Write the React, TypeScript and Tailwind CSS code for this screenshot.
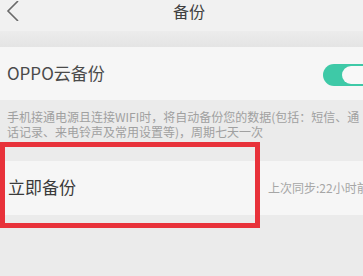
export default function App() {
  return (
    <div
      className="relative w-[363px] h-[276px] overflow-hidden bg-[#ebebeb] text-[#3a3a3a]"
      style={{ fontFamily: '"Noto Sans CJK SC", "Noto Sans", sans-serif' }}
    >
      {/* header */}
      <div className="relative h-[31px] bg-[#f1f1f1] flex items-start justify-center pt-[2px]">
        <svg className="absolute left-[5px] top-[1px]" width="15" height="20" viewBox="0 0 15 20">
          <path d="M13 0 L3 10 L13 20" fill="none" stroke="#6a6a6a" strokeWidth="1.6" />
        </svg>
        <span className="pl-[15px] text-[16px] leading-[18px] text-[#404040]">备份</span>
      </div>
      <div className="h-[16px] bg-gradient-to-b from-[#ececec] to-[#e4e4e4]" />

      {/* cloud backup row */}
      <div className="h-[53px] bg-[#f6f6f6] flex items-center justify-between pl-[7px]">
        <span className="text-[17px] text-[#4a4a4a] -mt-[2px]">OPPO云备份</span>
        <div className="w-[52px] h-[22px] -mr-[12px] mt-[2px] rounded-full bg-[#3ec9a7] flex items-center justify-end pr-[3px]">
          <div className="w-[30px] h-[18px] rounded-full bg-[#f8f8f8]" />
        </div>
      </div>

      {/* description */}
      <div className="pl-[7px] pt-[9px] text-[12px] leading-[15px] text-[#a0a0a0] whitespace-nowrap">
        <div>手机接通电源且连接WIFI时，将自动备份您的数据(包括：短信、通</div>
        <div>话记录、来电铃声及常用设置等)，周期七天一次</div>
      </div>

      {/* backup now row */}
      <div className="mt-[22px] h-[54px] bg-[#f6f6f6] flex items-center pl-[8px]">
        <span className="w-[260px] shrink-0 text-[17px] text-[#3a3a3a] -mt-[2px]">立即备份</span>
        <span className="shrink-0 text-[12px] text-[#a6a6a6] whitespace-nowrap -mt-[1px]">上次同步:22小时前</span>
      </div>

      {/* red highlight annotation */}
      <div className="absolute left-0 top-[142px] w-[260px] h-[86px] border-[5px] border-[#e8323a]" />
    </div>
  );
}
